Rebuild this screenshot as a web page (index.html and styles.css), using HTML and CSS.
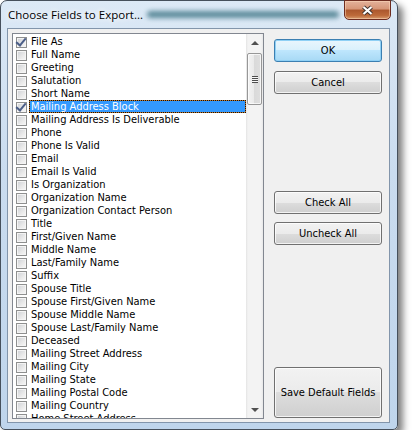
FILE: index.html
```html
<!DOCTYPE html>
<html lang="en">
<head>
    <meta charset="UTF-8">
    <title>Choose Fields to Export...</title>
    <link rel="stylesheet" href="styles.css">
</head>
<body>
    <div class="window">
        <div class="titlebar">
            <span class="title">Choose Fields to Export...</span>
            <span class="glow"></span>
            <button class="close" title="Close">
                <svg width="13" height="11" viewBox="0 0 13 11">
                    <path d="M2.5 2 L10.5 9 M10.5 2 L2.5 9" stroke="#3b302c" stroke-width="4" fill="none"/>
                    <path d="M2.5 2 L10.5 9 M10.5 2 L2.5 9" stroke="#fff" stroke-width="2.2" fill="none"/>
                </svg>
            </button>
        </div>
        <div class="client">
            <div class="fieldlist">
                <ul class="items">
                    <li class="item checked"><span class="box"></span><span class="label">File As</span></li>
                    <li class="item"><span class="box"></span><span class="label">Full Name</span></li>
                    <li class="item"><span class="box"></span><span class="label">Greeting</span></li>
                    <li class="item"><span class="box"></span><span class="label">Salutation</span></li>
                    <li class="item"><span class="box"></span><span class="label">Short Name</span></li>
                    <li class="item checked selected"><span class="box"></span><span class="label">Mailing Address Block</span></li>
                    <li class="item"><span class="box"></span><span class="label">Mailing Address Is Deliverable</span></li>
                    <li class="item"><span class="box"></span><span class="label">Phone</span></li>
                    <li class="item"><span class="box"></span><span class="label">Phone Is Valid</span></li>
                    <li class="item"><span class="box"></span><span class="label">Email</span></li>
                    <li class="item"><span class="box"></span><span class="label">Email Is Valid</span></li>
                    <li class="item"><span class="box"></span><span class="label">Is Organization</span></li>
                    <li class="item"><span class="box"></span><span class="label">Organization Name</span></li>
                    <li class="item"><span class="box"></span><span class="label">Organization Contact Person</span></li>
                    <li class="item"><span class="box"></span><span class="label">Title</span></li>
                    <li class="item"><span class="box"></span><span class="label">First/Given Name</span></li>
                    <li class="item"><span class="box"></span><span class="label">Middle Name</span></li>
                    <li class="item"><span class="box"></span><span class="label">Last/Family Name</span></li>
                    <li class="item"><span class="box"></span><span class="label">Suffix</span></li>
                    <li class="item"><span class="box"></span><span class="label">Spouse Title</span></li>
                    <li class="item"><span class="box"></span><span class="label">Spouse First/Given Name</span></li>
                    <li class="item"><span class="box"></span><span class="label">Spouse Middle Name</span></li>
                    <li class="item"><span class="box"></span><span class="label">Spouse Last/Family Name</span></li>
                    <li class="item"><span class="box"></span><span class="label">Deceased</span></li>
                    <li class="item"><span class="box"></span><span class="label">Mailing Street Address</span></li>
                    <li class="item"><span class="box"></span><span class="label">Mailing City</span></li>
                    <li class="item"><span class="box"></span><span class="label">Mailing State</span></li>
                    <li class="item"><span class="box"></span><span class="label">Mailing Postal Code</span></li>
                    <li class="item"><span class="box"></span><span class="label">Mailing Country</span></li>
                    <li class="item"><span class="box"></span><span class="label">Home Street Address</span></li>
                </ul>
                <div class="scrollbar">
                    <div class="arrow up"></div>
                    <div class="track">
                        <div class="thumb"><span class="grip"></span></div>
                    </div>
                    <div class="arrow down"></div>
                </div>
            </div>
            <div class="buttons">
                <button class="btn default">OK</button>
                <button class="btn cancel">Cancel</button>
                <button class="btn check-all">Check All</button>
                <button class="btn uncheck-all">Uncheck All</button>
                <button class="btn save">Save Default Fields</button>
            </div>
        </div>
    </div>
</body>
</html>
```

FILE: styles.css
```css
body {
    margin: 0;
    background: #fff;
    font-family: "DejaVu Sans Condensed", "DejaVu Sans", sans-serif;
    font-size: 11px;
    color: #000;
}

.window {
    position: relative;
    width: 398px;
    height: 430px;
    box-sizing: border-box;
    display: flex;
    flex-direction: column;
    padding: 0 7px 6px 6px;
    border: 1px solid #46505c;
    border-radius: 7px 7px 5px 5px;
    background: linear-gradient(#dce9f6, #cadcef 40%, #bfd5ec);
    box-shadow: 5px 5px 7px rgba(0, 0, 0, 0.5);
}

.titlebar {
    flex: none;
    height: 27px;
    display: flex;
    align-items: center;
    padding-left: 1px;
}

.title {
    position: relative;
    z-index: 1;
    font-family: "Open Sans", "Noto Sans", sans-serif;
    font-size: 11.5px;
    text-shadow: 0 0 6px #fff, 0 0 6px #fff;
}

/* aero glass streak behind the caption */
.glow {
    position: absolute;
    left: 146px;
    top: 10px;
    width: 192px;
    height: 7px;
    border-radius: 4px;
    background: #4d8090;
    filter: blur(2.5px);
    opacity: 0.9;
}

.close {
    position: absolute;
    top: -1px;
    right: 6px;
    width: 47px;
    height: 20px;
    box-sizing: border-box;
    padding: 0;
    display: flex;
    align-items: center;
    justify-content: center;
    border: 1px solid #6d2c20;
    border-radius: 0 0 5px 5px;
    background: linear-gradient(#e3b29b, #d69577 45%, #ab572d 50%, #bd6a3a 80%, #d79b6e);
    box-shadow: inset 0 0 0 1px rgba(255, 220, 190, 0.5);
}

.client {
    flex: 1;
    min-height: 0;
    display: flex;
    padding: 4px 7px 3px 4px;
    border: 1px solid #8295ab;
    background: #f0f0f0;
}

.fieldlist {
    width: 252px;
    min-height: 0;
    box-sizing: border-box;
    display: flex;
    border: 1px solid #828790;
    background: #fff;
}

.items {
    flex: 1;
    min-width: 0;
    list-style: none;
    margin: 0;
    padding: 1px 0 0 3px;
    overflow: hidden;
}

.item {
    display: flex;
    align-items: flex-start;
    height: 13px;
}

.box {
    position: relative;
    flex: none;
    width: 11px;
    height: 11px;
    margin-top: 2px;
    box-sizing: border-box;
    border: 1px solid #8e8f8f;
    background: linear-gradient(135deg, #cdd0d5, #eaeaea 60%, #f8f8f8);
    box-shadow: inset 0 0 0 1px #f4f4f4;
}

.item.checked .box::after {
    content: "";
    position: absolute;
    left: 1px;
    top: -2px;
    width: 4px;
    height: 8px;
    border: solid #4b5e88;
    border-width: 0 2px 2px 0;
    transform: rotate(40deg);
}

.label {
    flex: 1;
    min-width: 0;
    margin-left: 2px;
    padding: 0 2px;
    line-height: 13px;
    white-space: nowrap;
    overflow: hidden;
}

.item.selected .label {
    padding: 0 1px;
    line-height: 11px;
    color: #fff;
    border: 1px dotted #111;
    background: linear-gradient(#3399ff, #3399ff) padding-box, #c4782a;
}

.scrollbar {
    flex: none;
    width: 17px;
    display: flex;
    flex-direction: column;
    background: linear-gradient(90deg, #e4e4e4, #f3f3f3 2px, #f3f3f3 15px, #e8e8e8);
}

.arrow {
    flex: none;
    height: 17px;
    display: flex;
    align-items: center;
    justify-content: center;
}

.arrow::before {
    content: "";
    border-left: 4px solid transparent;
    border-right: 4px solid transparent;
}

.arrow.up::before {
    border-bottom: 4px solid #505050;
}

.arrow.down::before {
    border-top: 4px solid #505050;
}

.track {
    flex: 1;
    padding-top: 2px;
}

.thumb {
    height: 52px;
    margin: 0 1px;
    box-sizing: border-box;
    display: flex;
    align-items: center;
    justify-content: center;
    border: 1px solid #979797;
    border-radius: 2px;
    background: linear-gradient(90deg, #f3f3f3, #e9e9e9 50%, #dadada 50%, #dedede);
    box-shadow: inset 0 0 0 1px rgba(255, 255, 255, 0.7);
}

.grip {
    width: 6px;
    height: 7px;
    background: repeating-linear-gradient(#4d4d4d 0 1px, #f6f6f6 1px 2px);
}

.buttons {
    width: 108px;
    margin-left: 10px;
    padding-top: 6px;
    display: flex;
    flex-direction: column;
}

.btn {
    flex: none;
    height: 23px;
    padding: 0;
    font: inherit;
    color: #000;
    border: 1px solid #707070;
    border-radius: 3px;
    background: linear-gradient(#f2f2f2, #ebebeb 50%, #dddddd 50%, #cfcfcf);
    box-shadow: inset 0 0 0 1px rgba(255, 255, 255, 0.75);
}

.btn.default {
    border-color: #3c7fb1;
    background: linear-gradient(#eaf6fd, #d9f0fc 50%, #bee6fd 50%, #a7d9f5);
    box-shadow: inset 0 0 0 1px #8fd0f5;
}

.btn.cancel {
    margin-top: 9px;
}

.btn.check-all {
    margin-top: 97px;
}

.btn.uncheck-all {
    margin-top: 8px;
}

.btn.save {
    margin-top: auto;
    margin-bottom: 1px;
    height: 51px;
}
```
